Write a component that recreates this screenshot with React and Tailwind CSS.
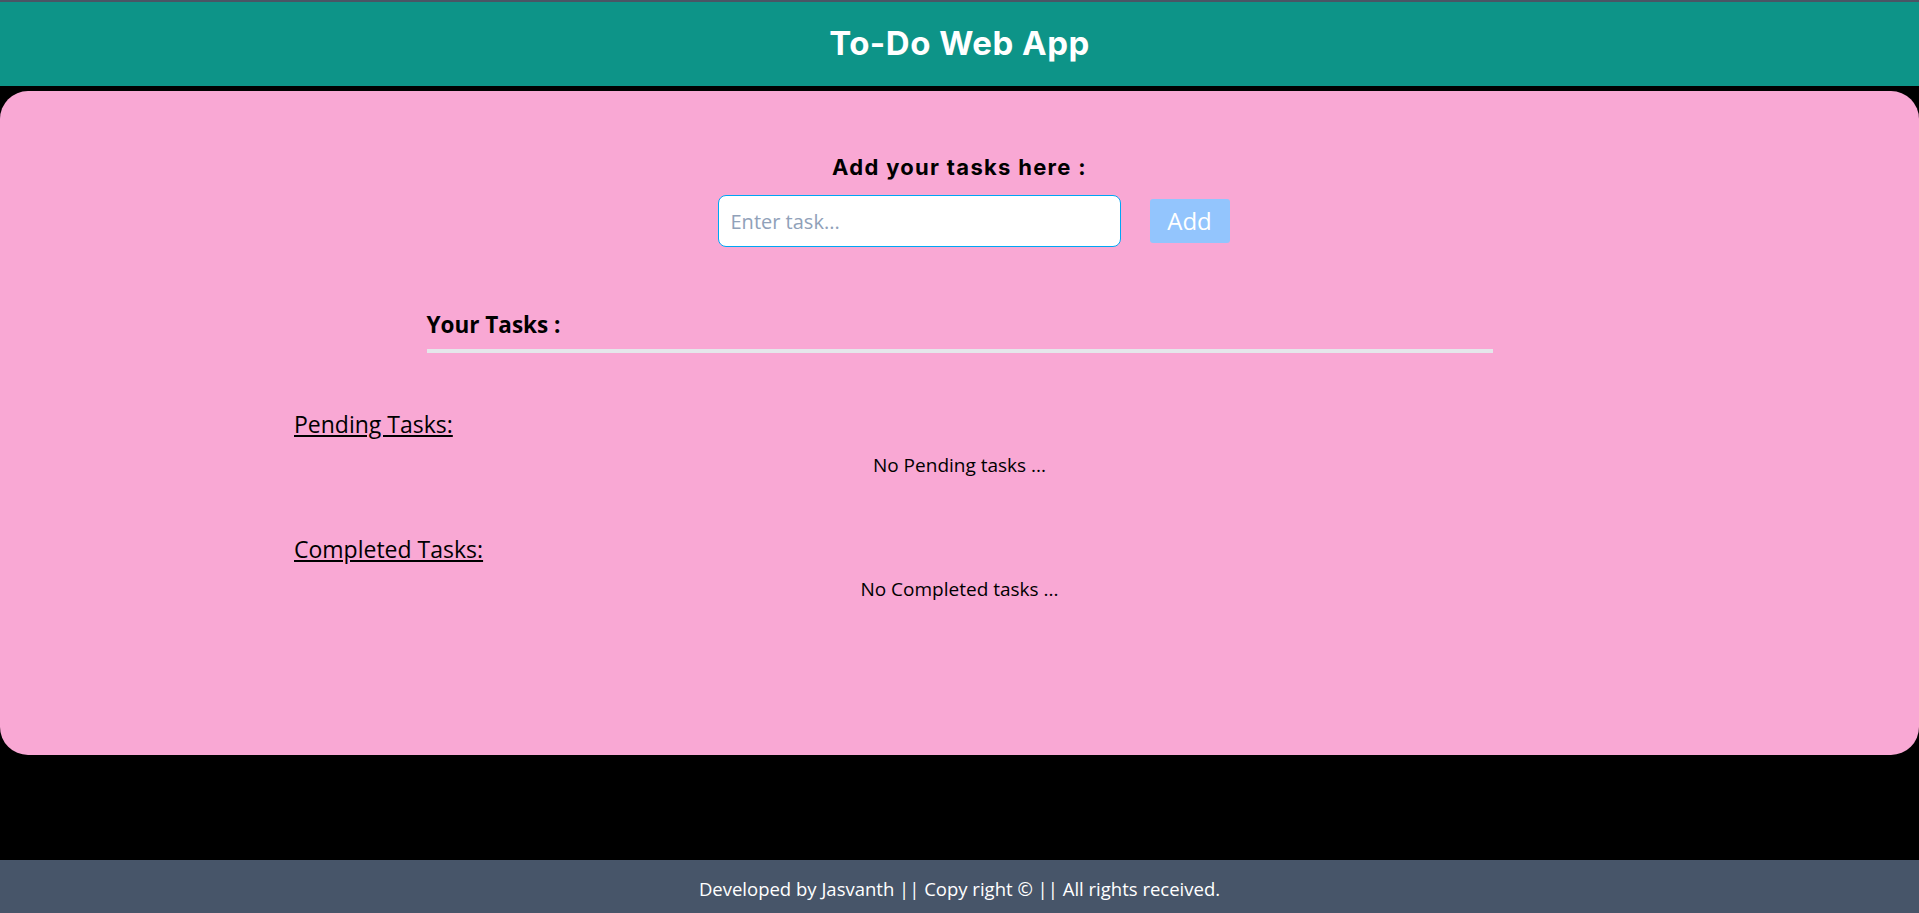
export default function App() {
    const pending = [];
    const completed = [];

    return (
        <div
            className="h-screen bg-black flex flex-col"
            style={{ fontFamily: '"Open Sans", "Noto Sans", sans-serif' }}
        >
            <header className="h-[86px] bg-[#0d9488] border-t-2 border-gray-600 flex items-center justify-center">
                <h1
                    className="text-[33px] font-bold text-white tracking-[0.5px]"
                    style={{ fontFamily: 'Inter, sans-serif' }}
                >
                    To-Do Web App
                </h1>
            </header>

            <main className="mt-[5px] h-[664px] bg-[#f9a8d4] rounded-[28px] pt-[62px]">
                <div className="flex flex-col items-center">
                    <h2
                        className="text-[22px] font-bold text-black leading-7 tracking-[1.3px]"
                        style={{ fontFamily: 'Inter, sans-serif' }}
                    >
                        Add your tasks here :
                    </h2>
                    <div className="mt-[14px] flex items-center gap-[29px] pl-[28px]">
                        <input
                            type="text"
                            placeholder="Enter task..."
                            className="w-[403px] h-[52px] bg-white rounded-lg border-[1.5px] border-sky-500 px-3 text-[20px] text-gray-800 placeholder:text-slate-400 outline-none"
                        />
                        <button className="w-[80px] h-[44px] bg-[#93c5fd] rounded-[3px] text-white text-[24px]">
                            Add
                        </button>
                    </div>
                </div>

                <div className="w-[1066px] mx-auto mt-[63px]">
                    <h3 className="text-[22.5px] font-bold text-black leading-[30px]">
                        Your Tasks :
                    </h3>
                    <div className="mt-[9px] h-[4px] bg-gray-200"></div>
                </div>

                <div className="w-[1331px] mx-auto mt-[56px] text-black">
                    <section>
                        <h4 className="text-[23px] underline leading-[30px]">Pending Tasks:</h4>
                        {pending.length === 0 ? (
                            <p className="mt-[13px] text-center text-[19px] leading-[26px]">
                                No Pending tasks ...
                            </p>
                        ) : null}
                    </section>
                    <section className="mt-[56px]">
                        <h4 className="text-[23px] underline leading-[30px]">Completed Tasks:</h4>
                        {completed.length === 0 ? (
                            <p className="mt-[12px] text-center text-[19px] leading-[26px]">
                                No Completed tasks ...
                            </p>
                        ) : null}
                    </section>
                </div>
            </main>

            <footer className="mt-auto h-[53px] bg-[#475569] flex items-center justify-center pt-[5px]">
                <p className="text-white text-[18.5px]">
                    Developed by Jasvanth || Copy right © || All rights received.
                </p>
            </footer>
        </div>
    );
}
